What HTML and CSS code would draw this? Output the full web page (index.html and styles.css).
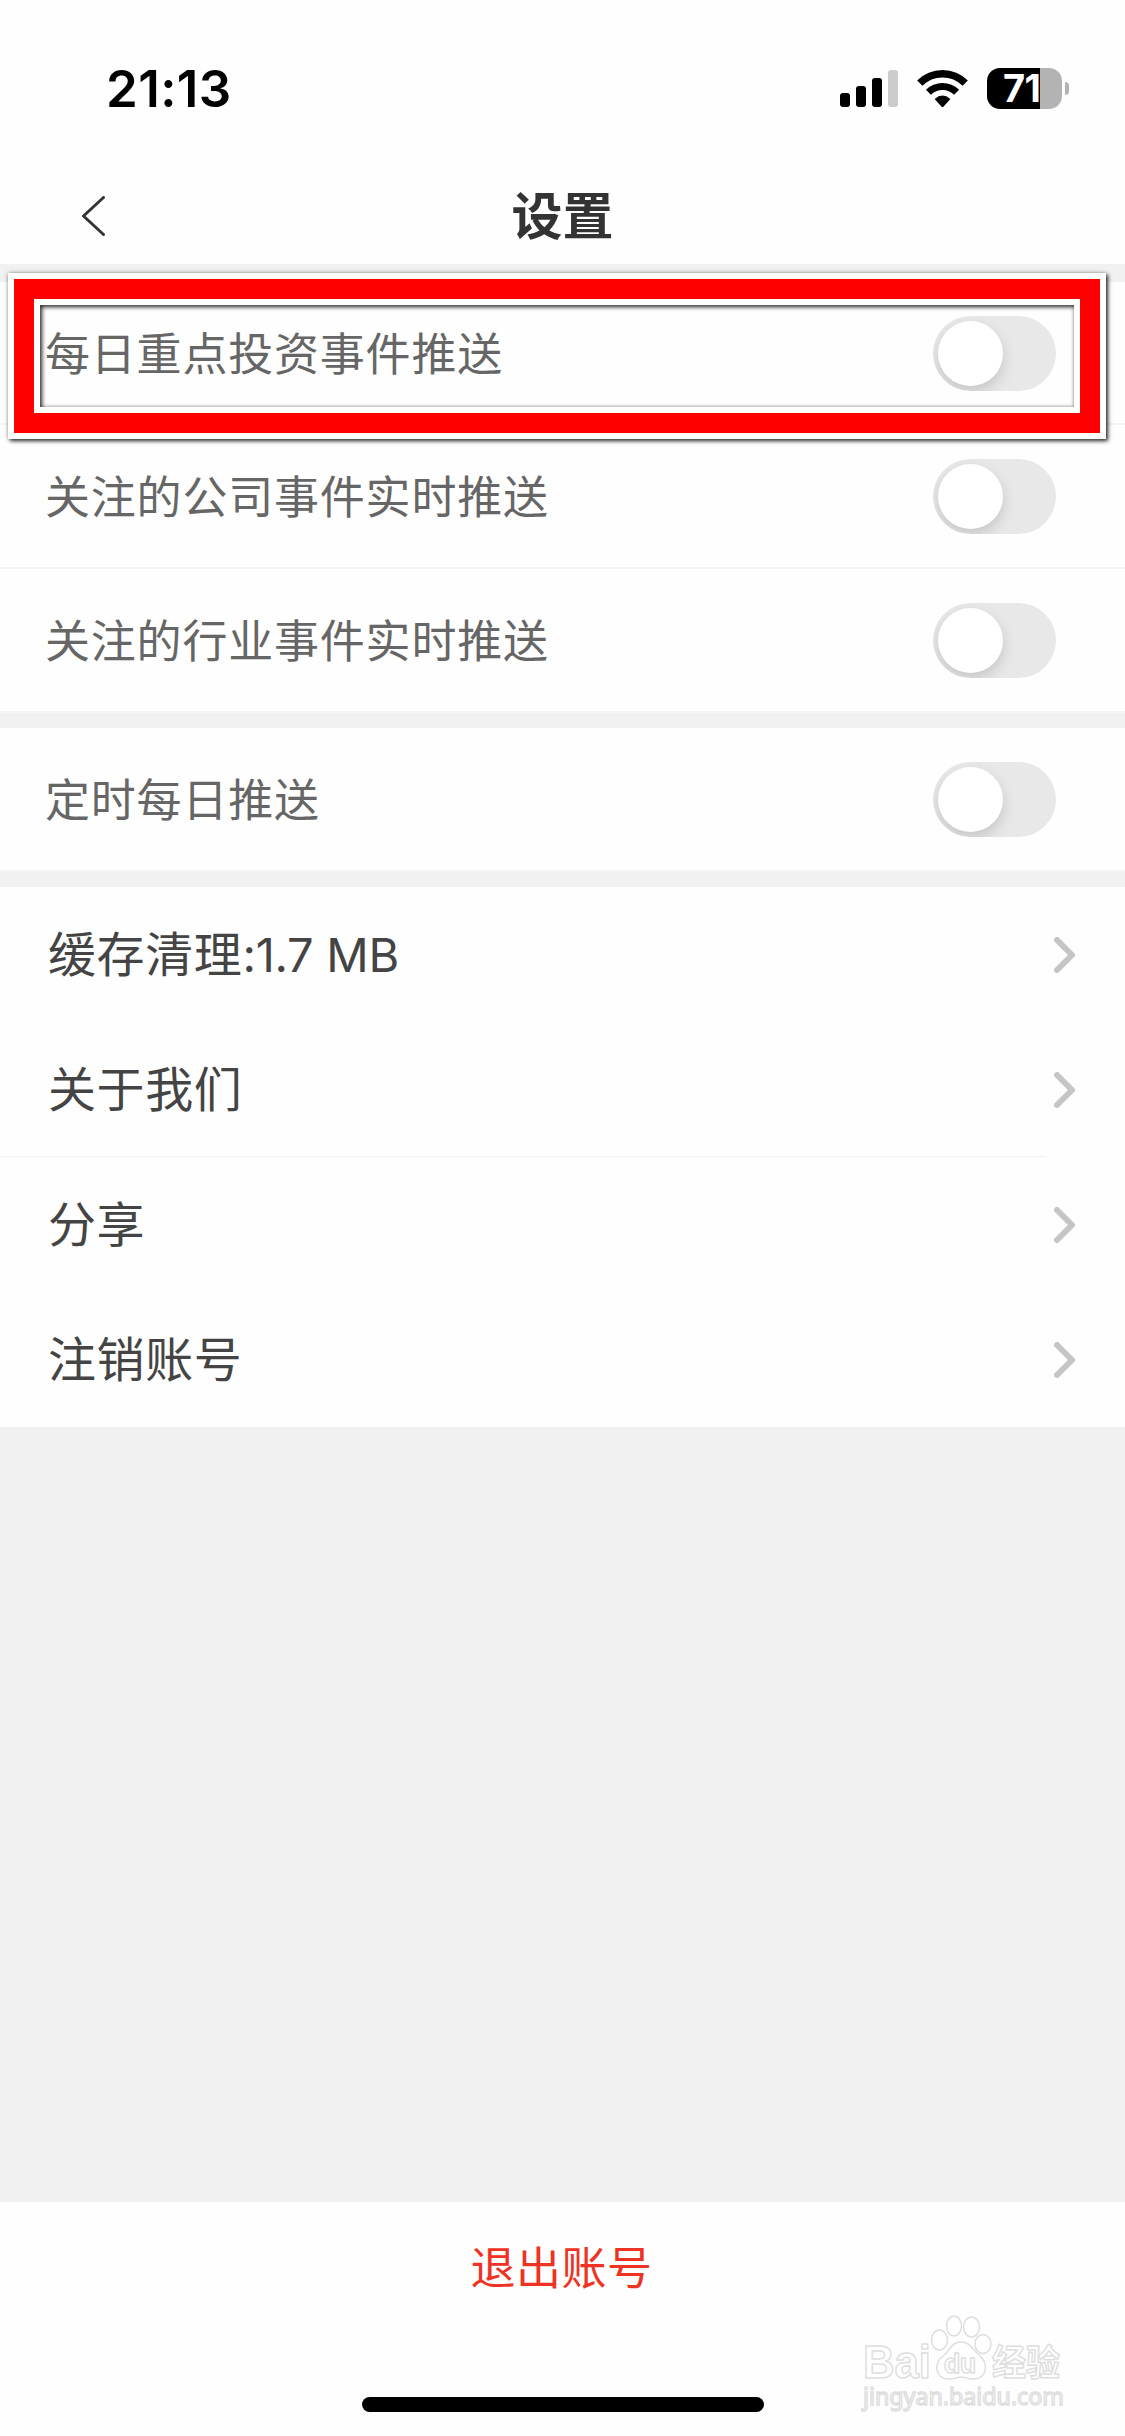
FILE: index.html
```html
<!DOCTYPE html>
<html lang="zh-CN">
<head>
    <meta charset="UTF-8">
    <meta name="viewport" content="width=device-width, initial-scale=1.0">
    <title>设置</title>
    <link rel="stylesheet" href="styles.css">
</head>
<body>
<div class="status-bar">
    <span class="time">21:13</span>
    <div class="status-icons">
        <svg class="signal" width="58" height="37" viewBox="0 0 58 37">
            <rect x="0" y="23" width="10" height="14" rx="3"/>
            <rect x="16" y="16" width="10" height="21" rx="3"/>
            <rect x="32" y="8" width="10" height="29" rx="3"/>
            <rect x="48" y="0" width="10" height="37" rx="3" fill="#ccc"/>
        </svg>
        <svg class="wifi" width="51" height="38" viewBox="0 0 51 38">
            <path d="M2.800 13.200a32 32 0 0 1 45.400 0" fill="none" stroke="#000" stroke-width="7.4"/>
            <path d="M11.400 22.300a20 20 0 0 1 28.200 0" fill="none" stroke="#000" stroke-width="7"/>
            <path d="M17.600 29Q25.500 22.200 33.400 29L26.600 36.500Q25.500 37.700 24.400 36.500Z"/>
        </svg>
        <div class="battery"><span>71</span></div>
        <div class="battery-cap"></div>
    </div>
</div>

<header class="nav">
    <svg class="back" width="23" height="40" viewBox="0 0 23 40">
        <path d="M21.500 1.500L1.500 20L21.500 38.500"/>
    </svg>
    <h1>设置</h1>
</header>

<section class="push">
    <label class="row"><span>每日重点投资事件推送</span><span class="switch"></span></label>
    <label class="row"><span>关注的公司事件实时推送</span><span class="switch"></span></label>
    <label class="row"><span>关注的行业事件实时推送</span><span class="switch"></span></label>
    <div class="highlight"></div>
</section>

<section class="push">
    <label class="row single"><span>定时每日推送</span><span class="switch"></span></label>
</section>

<ul class="menu">
    <li>
        <span>缓存清理<span class="size">:1.7 MB</span></span>
        <svg class="arrow" width="22" height="36" viewBox="0 0 22 36"><path d="M3 3L18 18L3 33"/></svg>
    </li>
    <li class="line">
        <span>关于我们</span>
        <svg class="arrow" width="22" height="36" viewBox="0 0 22 36"><path d="M3 3L18 18L3 33"/></svg>
    </li>
    <li>
        <span>分享</span>
        <svg class="arrow" width="22" height="36" viewBox="0 0 22 36"><path d="M3 3L18 18L3 33"/></svg>
    </li>
    <li>
        <span>注销账号</span>
        <svg class="arrow" width="22" height="36" viewBox="0 0 22 36"><path d="M3 3L18 18L3 33"/></svg>
    </li>
</ul>

<footer>
    <button type="button" class="logout">退出账号</button>
    <div class="home-indicator"></div>
    <svg class="watermark" width="226" height="108" viewBox="-8 0 226 108">
        <text class="brand" x="3" y="65" textLength="68" lengthAdjust="spacingAndGlyphs">Bai</text>
        <ellipse cx="79.500" cy="27" rx="8" ry="10"/>
        <ellipse cx="94" cy="13" rx="7.500" ry="10"/>
        <ellipse cx="111.500" cy="14" rx="8" ry="10"/>
        <ellipse cx="123" cy="31" rx="8" ry="9.500"/>
        <path d="M101 29C91 29 90 38 83 43C74 49 74 66 89 66C94 66 97 64 101 64C105 64 108 66 113 66C128 66 128 50 120 43C113 38 111 29 101 29Z"/>
        <text class="du" x="84" y="59.500" textLength="32" lengthAdjust="spacingAndGlyphs">du</text>
        <text class="cn" x="132" y="63" textLength="68" lengthAdjust="spacingAndGlyphs">经验</text>
        <text class="url" x="3" y="92" textLength="201" lengthAdjust="spacingAndGlyphs">jingyan.baidu.com</text>
    </svg>
</footer>
</body>
</html>
```
FILE: styles.css
```css
*,
*::before,
*::after {
    box-sizing: border-box;
}
body {
    display: flex;
    flex-direction: column;
    height: 2436px;
    margin: 0;
    background-color: #f1f1f1;
    font-family: Inter, 'Noto Sans CJK SC', sans-serif;
    color: #444;
}

/* status bar */
.status-bar {
    display: flex;
    justify-content: space-between;
    align-items: center;
    height: 166px;
    padding: 11px 56px 0 106px;
    background-color: #fefefe;
    color: #000;
}
.time {
    margin-top: 1px;
    font-size: 51px;
    font-weight: 600;
    line-height: 60px;
    letter-spacing: 0.4px;
}
.status-icons {
    display: flex;
    align-items: center;
}
.wifi {
    margin: 0 19px;
}
.battery {
    width: 75px;
    height: 41px;
    padding-left: 16px;
    border-radius: 13px;
    background: linear-gradient(to right, #000 53px, #b3b3b3 53px);
    color: #fff;
    font-size: 38px;
    font-weight: 700;
    line-height: 41px;
    letter-spacing: -0.5px;
}
.battery-cap {
    width: 4px;
    height: 13px;
    margin-left: 3px;
    border-radius: 0 4px 4px 0;
    background-color: #b3b3b3;
}

/* title bar */
.nav {
    display: grid;
    grid-template-columns: 1fr auto 1fr;
    align-items: center;
    height: 98px;
    margin-bottom: 18px;
    padding: 2px 82px 0;
    background-color: #fefefe;
}
.nav h1 {
    margin: 2px 0 0;
    color: #333;
    font-size: 51px;
    font-weight: 700;
    line-height: 94px;
}
.back path {
    fill: none;
    stroke: #333;
    stroke-width: 3;
    stroke-linecap: round;
    stroke-linejoin: round;
}

/* push switches */
.push {
    position: relative;
    margin-bottom: 15px;
}
.row {
    display: flex;
    justify-content: space-between;
    align-items: center;
    height: 143px;
    padding: 1px 69px 0 45px;
    border-bottom: 2px solid #f5f5f5;
    background-color: #fefefe;
    color: #666;
    font-size: 45px;
    line-height: 64px;
    letter-spacing: 0.8px;
}
.row span:first-child {
    margin-top: 3px;
}
.row + .row,
.row.single {
    height: 144px;
}
.switch {
    width: 123px;
    height: 75px;
    padding: 5px;
    border-radius: 38px;
    background-color: #e8e8e8;
    overflow: hidden;
}
.switch::before {
    content: '';
    display: block;
    width: 65px;
    height: 65px;
    border-radius: 50%;
    background-color: #fff;
    box-shadow: 0 6px 14px rgba(0, 0, 0, 0.15);
}
.highlight {
    position: absolute;
    top: -9px;
    left: 8px;
    width: 1098px;
    height: 166px;
    border: 6px solid #fff;
    box-shadow: 2px 2px 4px rgba(0, 0, 0, 0.8), 0 0 4px rgba(0, 0, 0, 0.3);
}
.highlight::before {
    content: '';
    display: block;
    height: 100%;
    border: 20px solid #f00;
}
.highlight::after {
    content: '';
    position: absolute;
    inset: 20px;
    border: 6px solid #fff;
    box-shadow: inset 2px 2px 4px rgba(0, 0, 0, 0.8), inset 0 0 4px rgba(0, 0, 0, 0.3);
}

/* menu */
.menu {
    margin: 0;
    padding: 0;
    list-style: none;
    background-color: #fefefe;
}
.menu li {
    display: flex;
    justify-content: space-between;
    align-items: center;
    height: 135px;
    padding: 0 49px 0 48px;
    font-size: 48px;
    line-height: 64px;
    letter-spacing: 0.6px;
}
.menu li > span {
    margin-top: 1px;
}
.menu .size {
    font-size: 47px;
    letter-spacing: -0.3px;
}
.menu .line {
    background: linear-gradient(#f1f1f1, #f1f1f1) left bottom / 1046px 1px no-repeat;
}
.arrow path {
    fill: none;
    stroke: #c5c5c7;
    stroke-width: 6;
    stroke-linecap: round;
    stroke-linejoin: round;
}

/* bottom */
footer {
    position: relative;
    display: flex;
    flex-direction: column;
    justify-content: space-between;
    align-items: center;
    height: 234px;
    margin-top: auto;
    padding-bottom: 24px;
    background-color: #fefefe;
}
.logout {
    height: 126px;
    padding: 0 2px 0 0;
    border: none;
    background: none;
    color: #ee3324;
    font-family: inherit;
    font-size: 45px;
    letter-spacing: 0.5px;
}
.home-indicator {
    width: 402px;
    height: 15px;
    border-radius: 8px;
    background-color: #000;
}
.watermark {
    position: absolute;
    right: 47px;
    bottom: 15px;
    fill: #fff;
    stroke: #dedede;
    stroke-width: 1.5;
}
.watermark .brand {
    font: 700 46px 'Liberation Sans', sans-serif;
}
.watermark .du {
    font: 700 27px Inter, sans-serif;
}
.watermark .cn {
    font: 700 36px 'Noto Sans CJK SC', sans-serif;
}
.watermark .url {
    font: 400 24px 'Noto Sans', sans-serif;
}
```
